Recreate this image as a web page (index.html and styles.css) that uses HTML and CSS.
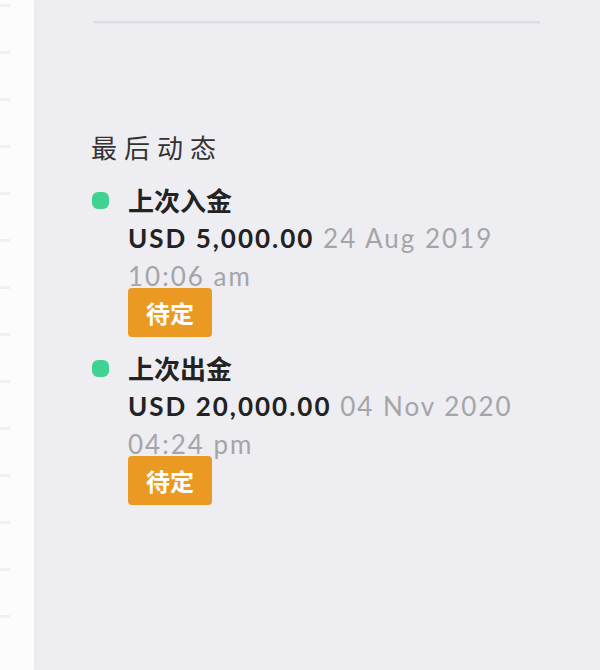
FILE: index.html
```html
<!DOCTYPE html>
<html lang="zh-CN">
<head>
    <meta charset="UTF-8">
    <meta name="viewport" content="width=device-width, initial-scale=1.0">
    <title>最后动态</title>
    <link rel="stylesheet" href="styles.css">
</head>
<body>
    <div class="page">
        <!-- Barra lateral (recortada) -->
        <aside class="sidebar">
            <span class="mark"></span><span class="mark"></span><span class="mark"></span>
            <span class="mark"></span><span class="mark"></span><span class="mark"></span>
            <span class="mark"></span><span class="mark"></span><span class="mark"></span>
            <span class="mark"></span><span class="mark"></span><span class="mark"></span>
            <span class="mark"></span><span class="mark"></span>
        </aside>

        <main class="main">
            <div class="divider"></div>

            <h2 class="section-title">最后动态</h2>

            <ul class="activity">
                <li class="activity-item">
                    <span class="dot"></span>
                    <div class="activity-body">
                        <div class="activity-title">上次入金</div>
                        <div class="activity-info">
                            <span class="amount">USD 5,000.00</span>
                            <span class="date">24 Aug 2019</span>
                            <span class="date time">10:06 am</span>
                        </div>
                        <span class="badge">待定</span>
                    </div>
                </li>
                <li class="activity-item">
                    <span class="dot"></span>
                    <div class="activity-body">
                        <div class="activity-title">上次出金</div>
                        <div class="activity-info">
                            <span class="amount">USD 20,000.00</span>
                            <span class="date">04 Nov 2020</span>
                            <span class="date time">04:24 pm</span>
                        </div>
                        <span class="badge">待定</span>
                    </div>
                </li>
            </ul>
        </main>
    </div>
</body>
</html>
```

FILE: styles.css
```css
/* Estilo básico para el cuerpo */
body {
    margin: 0;
    font-family: Lato, "Noto Sans CJK SC", sans-serif;
    background-color: #ededf2;
}
/* Contenedor de la página */
.page {
    display: flex;
    min-height: 670px;
}
/* Barra lateral blanca */
.sidebar {
    width: 34px;
    background-color: #fcfcfc;
    box-shadow: 1px 0 3px rgba(0, 0, 0, 0.03);
    display: flex;
    flex-direction: column;
    gap: 44px;
    padding-top: 4px;
}
.mark {
    display: block;
    width: 10px;
    height: 3px;
    background-color: #f0f0f0;
}
/* Contenido principal */
.main {
    flex: 1;
    padding: 21px 60px 0 57px;
}
.divider {
    height: 2px;
    margin-left: 2px;
    background-color: #dcdce2;
    border-bottom: 1px solid #e6e6eb;
}
/* Título de la sección */
.section-title {
    margin: 105px 0 0;
    font-family: "Noto Sans CJK SC", sans-serif;
    font-size: 26px;
    font-weight: 400;
    line-height: 36px;
    letter-spacing: 7px;
    color: #333;
}
/* Lista de actividad */
.activity {
    list-style: none;
    margin: 18px 0 0;
    padding: 0;
}
.activity-item {
    display: grid;
    grid-template-columns: 37px 1fr;
    margin-bottom: 14px;
}
.dot {
    width: 17px;
    height: 17px;
    margin-top: 9px;
    margin-left: 1px;
    border-radius: 6px;
    background-color: #3fd291;
}
.activity-title {
    font-family: "Noto Sans CJK SC", sans-serif;
    font-size: 26px;
    font-weight: 700;
    line-height: 34px;
    color: #222;
}
.activity-info {
    margin-top: 2px;
    font-size: 26px;
    line-height: 38px;
    letter-spacing: 2px;
}
.amount {
    font-weight: 700;
    color: #222;
}
.date {
    color: #a5a5a8;
}
.time {
    white-space: nowrap;
}
/* Etiqueta de estado */
.badge {
    display: inline-block;
    margin-top: -7px;
    padding: 0 18px;
    height: 49px;
    line-height: 49px;
    font-family: "Noto Sans CJK SC", sans-serif;
    font-size: 24px;
    font-weight: 700;
    color: #fff;
    background-color: #ea9a23;
    border-radius: 4px;
}
```
